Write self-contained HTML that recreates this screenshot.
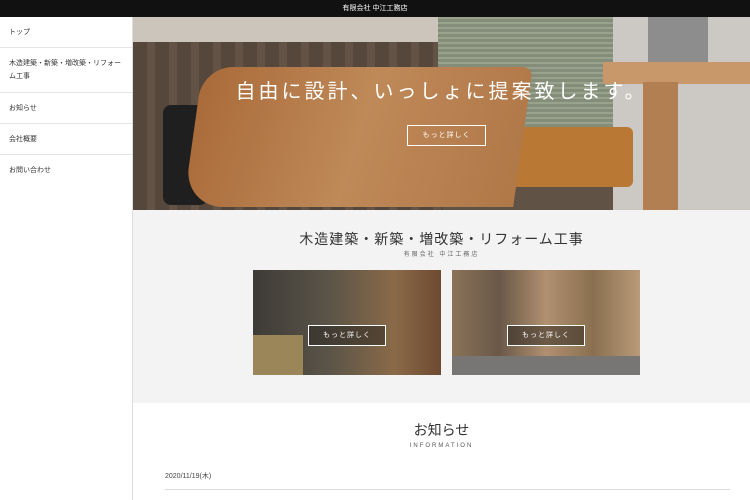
<!DOCTYPE html><html><head><meta charset="utf-8"><style>
*{margin:0;padding:0;box-sizing:border-box}
body{width:750px;height:500px;overflow:hidden;background:#fff;font-family:"Liberation Sans","Noto Sans CJK JP",sans-serif;position:relative}
.top{position:absolute;left:0;top:0;width:750px;height:17px;background:#111;color:#fff;font-size:7px;text-align:center;line-height:17px}
.side{position:absolute;left:0;top:17px;width:133px;height:483px;background:#fff;border-right:1px solid #ddd}
.side div{font-size:7px;color:#333;padding:0 9px;border-bottom:1px solid #e5e5e5;display:flex;align-items:center;line-height:13px}
.hero{position:absolute;left:133px;top:17px;width:617px;height:193px;overflow:hidden;background:#6a5a4c}
.hero div{position:absolute}
.sec{position:absolute;left:133px;top:210px;width:617px;height:193px;background:#f3f3f3}
.btn{position:absolute;border:1px solid #fff;color:#fff;font-size:7px;text-align:center;letter-spacing:1px}
</style></head><body>
<div class="top">有限会社 中江工務店</div>
<div class="side">
<div style="height:31px">トップ</div>
<div style="height:45px">木造建築・新築・増改築・リフォーム工事</div>
<div style="height:31px">お知らせ</div>
<div style="height:31px">会社概要</div>
<div style="height:31px;border:none">お問い合わせ</div>
</div>
<div class="hero">
<div style="left:0;top:0;width:617px;height:30px;background:#ddd6cc"></div>
<div style="left:0;top:25px;width:310px;height:170px;background:repeating-linear-gradient(90deg,#5e4e42 0 14px,#6c5a4c 14px 22px)"></div>
<div style="left:305px;top:0;width:180px;height:120px;background:repeating-linear-gradient(0deg,#8f9a84 0 3px,#a7b09a 3px 5px)"></div>
<div style="left:480px;top:0;width:137px;height:193px;background:#dedad5"></div>
<div style="left:470px;top:45px;width:147px;height:22px;background:#d9a474"></div>
<div style="left:510px;top:65px;width:35px;height:128px;background:#c08a5a"></div>
<div style="left:515px;top:0;width:60px;height:45px;background:#9a9a9a"></div>
<div style="left:30px;top:88px;width:45px;height:100px;background:#222;border-radius:8px"></div>
<div style="left:280px;top:75px;width:90px;height:45px;background:#c0394a;border-radius:10px"></div>
<div style="left:330px;top:110px;width:170px;height:60px;background:#c98338;border-radius:6px"></div>
<div style="left:60px;top:50px;width:330px;height:140px;background:linear-gradient(100deg,#b8743e,#d09560 50%,#c0824e);border-radius:30px 10px 0 40px;transform:skewX(-8deg)"></div>
<div style="left:0;top:0;width:617px;height:193px;background:rgba(0,0,0,.08)"></div>
<div style="left:0;top:58px;width:617px;text-align:center;color:#fff;font-size:20px;letter-spacing:3px">自由に設計、いっしょに提案致します。</div>
<div class="btn" style="left:274px;top:108px;width:79px;height:21px;line-height:19px">もっと詳しく</div>
</div>
<div class="sec">
<div style="position:absolute;top:19px;width:617px;text-align:center;font-size:14px;color:#333;letter-spacing:1px">木造建築・新築・増改築・リフォーム工事</div>
<div style="position:absolute;top:39px;width:617px;text-align:center;font-size:6px;color:#666;letter-spacing:2px">有限会社 中江工務店</div>
<div style="position:absolute;left:120px;top:60px;width:188px;height:105px;background:linear-gradient(90deg,#3e3b37,#5a5448 40%,#8a6a48 75%,#6e4a30)"></div>
<div style="position:absolute;left:120px;top:125px;width:50px;height:40px;background:#9a8658"></div>
<div style="position:absolute;left:319px;top:60px;width:188px;height:105px;background:linear-gradient(90deg,#8a7258,#6a5848 25%,#b09070 50%,#8a7050 75%,#b89a78);"></div>
<div style="position:absolute;left:319px;top:146px;width:188px;height:19px;background:#787674"></div>
<div class="btn" style="left:175px;top:115px;width:78px;height:21px;line-height:19px;background:rgba(40,35,30,.5)">もっと詳しく</div>
<div class="btn" style="left:374px;top:115px;width:78px;height:21px;line-height:19px;background:rgba(40,35,30,.5)">もっと詳しく</div>
</div>
<div style="position:absolute;left:133px;top:420px;width:617px;text-align:center;font-size:14px;color:#333">お知らせ</div>
<div style="position:absolute;left:133px;top:443px;width:617px;text-align:center;font-size:6px;color:#555;letter-spacing:2px">INFORMATION</div>
<div style="position:absolute;left:165px;top:471px;font-size:7px;color:#444">2020/11/19(木)</div>
<div style="position:absolute;left:165px;top:489px;width:565px;height:1px;background:#ddd"></div>
</body></html>
